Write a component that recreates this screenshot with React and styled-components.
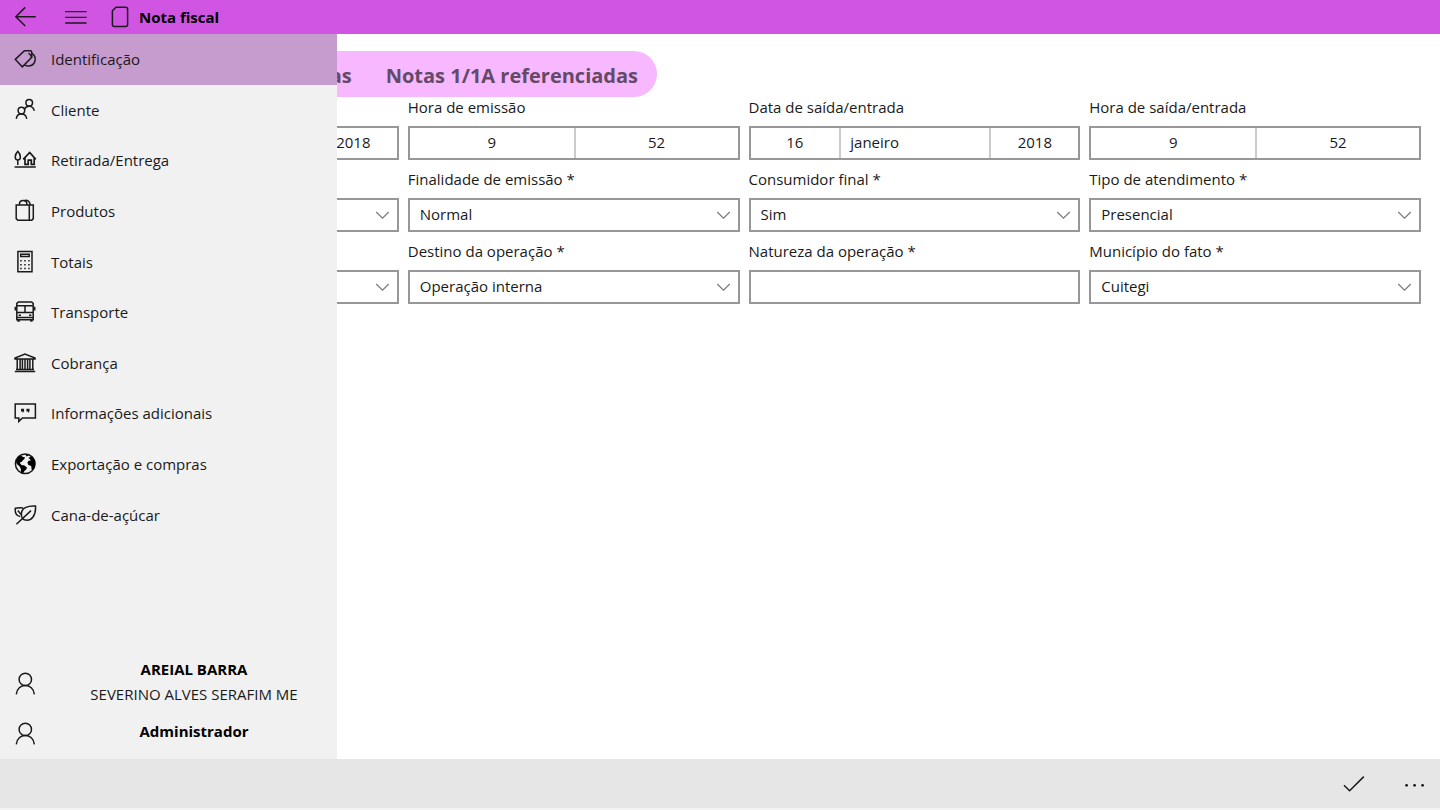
import React, { useState } from "react";
import styled, { createGlobalStyle } from "styled-components";

const GlobalStyle = createGlobalStyle`
  * {
    box-sizing: border-box;
  }

  body {
    margin: 0;
    background: #fff;
    color: #1a1a1a;
    font-family: "Segoe UI", "Open Sans", "Noto Sans", sans-serif;
    font-size: 15px;
    line-height: 20px;
  }

  button, input, select {
    font: inherit;
    color: inherit;
    border-radius: 0;
  }
`;

const Page = styled.div`
  min-height: 100vh;
  display: flex;
  flex-direction: column;
`;

const TopBar = styled.header`
  height: 34px;
  display: flex;
  align-items: center;
  background: #d155e3;
  color: #000;
`;

const BarButton = styled.button`
  width: 50px;
  height: 34px;
  padding: 0;
  border: none;
  background: none;
  display: flex;
  align-items: center;
  justify-content: center;
  cursor: pointer;
`;

const Title = styled.h1`
  margin: 0 0 0 8px;
  display: flex;
  align-items: center;
  gap: 7px;
  font-size: 15px;
  line-height: 20px;
  font-weight: 700;
`;

const Body = styled.div`
  position: relative;
  flex: 1;
  display: flex;
`;

/* opens over the form */
const Drawer = styled.aside`
  position: absolute;
  top: 0;
  bottom: 0;
  left: 0;
  width: 337px;
  display: flex;
  flex-direction: column;
  justify-content: space-between;
  background: #f1f1f1;
`;

const Menu = styled.nav`
  height: 506px;
  display: grid;
  grid-auto-rows: 1fr;
`;

const MenuItem = styled.button`
  border: none;
  padding: 0 0 0 13px;
  display: flex;
  align-items: center;
  gap: 14px;
  text-align: left;
  cursor: pointer;
  background: ${(props) => (props.$active ? "#c69bce" : "transparent")};
`;

const Accounts = styled.div`
  display: grid;
  grid-auto-rows: 50px;
`;

const Account = styled.button`
  border: none;
  background: none;
  padding: 0 0 0 13px;
  display: grid;
  grid-template-columns: 38px 1fr;
  grid-template-rows: 50px;
  align-items: center;
  cursor: pointer;
`;

const AccountText = styled.span`
  display: grid;
  padding-bottom: 5px;
  line-height: 25px;
  text-align: center;

  strong {
    color: #000;
  }
`;

const Content = styled.main`
  flex: 1;
  padding: 17px 19px 0 67px;
`;

const Tabs = styled.div`
  display: flex;
  justify-content: flex-end;
  align-items: center;
  gap: 34px;
  width: 590px;
  height: 46px;
  padding: 4px 19px 0;
  border-radius: 23px;
  background: #f8b8ff;
`;

const Tab = styled.button`
  border: none;
  background: none;
  padding: 0;
  font-size: 20px;
  line-height: 28px;
  font-weight: 700;
  white-space: nowrap;
  color: #634a67;
  cursor: pointer;
`;

const Form = styled.form`
  display: grid;
  grid-template-columns: repeat(4, 1fr);
  gap: 9px;
`;

const Field = styled.div`
  display: grid;
  grid-template-rows: 20px 34px;
  gap: 9px;
  min-width: 0;
`;

const Label = styled.label`
  white-space: nowrap;
`;

const Picker = styled.button`
  border: 2px solid #979797;
  background: #fff;
  padding: 0;
  display: grid;
  grid-template-columns: ${(props) => props.$columns};
  cursor: pointer;
`;

const Part = styled.span`
  display: flex;
  align-items: center;
  justify-content: ${(props) => (props.$left ? "flex-start" : "center")};
  padding: 0 9px 2px;

  & + & {
    border-left: 2px solid #cbcbcb;
  }
`;

const SelectBox = styled.div`
  position: relative;
  display: grid;

  svg {
    position: absolute;
    right: 9px;
    top: 10px;
    pointer-events: none;
  }
`;

const Select = styled.select`
  appearance: none;
  width: 100%;
  border: 2px solid #979797;
  background: #fff;
  padding: 0 32px 2px 10px;
`;

const TextBox = styled.input`
  width: 100%;
  border: 2px solid #979797;
  background: #fff;
  padding: 0 10px 2px;
`;

const CommandBar = styled.footer`
  height: 51px;
  display: flex;
  justify-content: flex-end;
  align-items: center;
  background: #e6e6e6;
  border-bottom: 2px solid #f3f3f3;
`;

const Command = styled.button`
  width: ${(props) => props.$width};
  height: 49px;
  border: none;
  background: none;
  padding: 0;
  display: flex;
  align-items: center;
  justify-content: center;
  cursor: pointer;
`;

function Icon({ children, size = 24 }) {
  return (
    <svg width={size} height={size} viewBox="0 0 24 24" fill="none" stroke="#1a1a1a" strokeWidth="1.5" aria-hidden="true">
      {children}
    </svg>
  );
}

const icons = {
  tag: (
    <>
      <path d="M2.3 12.4 11.4 3.8H17.2Q18.8 3.8 18.8 5.4V10.2L9.3 19.8Z" />
      <path d="M18.8 6.4C24.4 9.6 22.8 18.6 15.8 18.9C14 19 12.6 18.9 11.4 18.2" />
      <path d="M15.6 6.2C17.6 7.6 18.6 9 18.6 11" />
    </>
  ),
  people: (
    <>
      <circle cx="16.2" cy="4.8" r="3.3" />
      <path d="M11.6 11.2C12.8 7.2 19.8 6.6 21.3 12.8" />
      <circle cx="8.4" cy="12.6" r="3.3" />
      <path d="M3.3 20.8C4 14.4 12.8 14.4 13.7 20.8" />
    </>
  ),
  house: (
    <>
      <path d="M4.8 3.4C1.4 6.7 1.4 12 4.8 12S8.2 6.7 4.8 3.4ZM4.8 12V17M1.6 18.9H22.8" />
      <path d="M10.2 11.4 16.7 4.5 22.8 11.4M12 9.6V16.4H15.2V12.1H18.3V16.4H21.2V9.6" strokeWidth="1.7" />
    </>
  ),
  bag: (
    <>
      <path d="M3.2 6.1H20.3V19.6L18.8 21.3H4.8L3.2 19.6ZM16.3 6.1V21.3" />
      <path d="M6.5 6.1V4.8C6.5 0.4 13.9 0.4 13.9 4.8V6.1M10.8 2.2C13.8 0 17.2 2 17.2 6.1" />
    </>
  ),
  calculator: (
    <>
      <path d="M4.9 1.5H19V21.8H4.9ZM7.7 4.2H16.2V6.6H7.7Z" />
      <path d="M7.2 10.7H8.7M11.2 10.7H12.7M15.2 10.7H16.7M7.2 14.7H8.7M11.2 14.7H12.7M15.2 14.7H16.7M7.2 18.6H8.7M11.2 18.6H12.7M15.2 18.6H16.7" />
    </>
  ),
  bus: (
    <>
      <path d="M3.8 19.8V3.4L5.4 1.9H18.6L20.2 3.4V19.8ZM3.8 5.8H20.2M3.8 12.6H20.2M12 5.8V12.6M3.8 17.6H20.2" />
      <path d="M3.8 7.4H2.3V10.4M20.2 7.4H21.7V10.4M5.6 15.2H8M16 15.2H18.4" />
      <path d="M5.6 19.8V21.8M18.4 19.8V21.8" strokeWidth="2.4" />
    </>
  ),
  bank: (
    <>
      <path d="M2 8V7L12 3L22 7V8ZM1.8 20.4H22.2M3 18.4H21" />
      <path d="M4.2 8V18.4M7.1 8V18.4M9.4 8V18.4M12 8V18.4M14.6 8V18.4M16.9 8V18.4M19.8 8V18.4" />
    </>
  ),
  chat: (
    <>
      <path d="M2.2 3H22.4V17H9.4L5.8 20.4V17H2.2Z" />
      <path d="M8 7.8H11.1V10.2L9.6 12V10.4H8ZM13.4 7.8H16.5V10.2L15 12V10.4H13.4Z" fill="#1a1a1a" stroke="none" />
    </>
  ),
  globe: (
    <>
      <circle cx="12.2" cy="11.8" r="9.8" />
      <path
        d="M3 8.6L5.6 4.8L8 3.8L10.2 5L12 5.2L11.2 7.2L9.6 8.4L8.6 10L7 10.2L7.4 12L9 13.2L11 13.2L14 15.6L13.2 17.4L11.2 19.2L10 21.4L8 20.6L7.8 16.8L6.4 14.2L3.6 11.8ZM12.4 2.4L16.2 3L13.6 4.4ZM15.4 6L18.4 4.2L20.6 6L22.2 9.4L22.2 13.8L20 18L18.6 17.4L18.2 14L15.4 13L14.4 10.6L15.6 8.8L17.8 8.4L17 7.2Z"
        fill="#000"
        stroke="none"
      />
    </>
  ),
  leaf: (
    <>
      <path d="M22.5 3C14.2 2.7 8.4 4.7 8.4 11.2C8.4 14 9.4 16 11.4 16.8C18.4 18.8 23.2 12.5 22.5 3Z" />
      <path d="M3.4 21.3L18 7.6M10.2 4.9C7.8 4.6 4.8 4.6 2.3 5.3C1.8 9.6 3.2 12.8 7.2 13.5M4.8 7.6L8.2 11.4" />
    </>
  ),
  person: (
    <>
      <circle cx="12.3" cy="7.4" r="6.2" />
      <path d="M3.3 22.4C4 10.6 20.6 10.6 21.3 22.4" />
    </>
  ),
};

const menu = [
  ["Identificação", "tag"],
  ["Cliente", "people"],
  ["Retirada/Entrega", "house"],
  ["Produtos", "bag"],
  ["Totais", "calculator"],
  ["Transporte", "bus"],
  ["Cobrança", "bank"],
  ["Informações adicionais", "chat"],
  ["Exportação e compras", "globe"],
  ["Cana-de-açúcar", "leaf"],
];

function DateField({ id, label, day, month, year }) {
  return (
    <Field>
      <Label id={id + "-label"} htmlFor={id}>{label}</Label>
      <Picker id={id} type="button" aria-labelledby={`${id}-label ${id}`} $columns="78fr 132fr 78fr">
        <Part>{day}</Part>
        <Part $left>{month}</Part>
        <Part>{year}</Part>
      </Picker>
    </Field>
  );
}

function TimeField({ id, label, hour, minute }) {
  return (
    <Field>
      <Label id={id + "-label"} htmlFor={id}>{label}</Label>
      <Picker id={id} type="button" aria-labelledby={`${id}-label ${id}`} $columns="1fr 1fr">
        <Part>{hour}</Part>
        <Part>{minute}</Part>
      </Picker>
    </Field>
  );
}

function SelectField({ id, label, options }) {
  return (
    <Field>
      <Label htmlFor={id}>{label}</Label>
      <SelectBox>
        <Select id={id}>
          {options.map((option) => (
            <option key={option}>{option}</option>
          ))}
        </Select>
        <svg width="15" height="14" viewBox="0 0 15 14" fill="none" stroke="#7a7a7a" strokeWidth="1.2" aria-hidden="true">
          <path d="M1.2 4 7.5 10.2 13.8 4" />
        </svg>
      </SelectBox>
    </Field>
  );
}

export default function App() {
  const [active, setActive] = useState("Identificação");
  const [open, setOpen] = useState(true);

  return (
    <>
      <GlobalStyle />
      <Page>
        <TopBar>
          <BarButton type="button" aria-label="Voltar">
            <Icon>
              <path d="M22.8 11.7H2.8M12.2 2.4 2.8 11.7 12.2 21" />
            </Icon>
          </BarButton>
          <BarButton type="button" aria-label="Menu" onClick={() => setOpen(!open)}>
            <Icon>
              <path d="M2.2 6.6H23.6M2.2 12.4H23.6M2.2 18H23.6" strokeWidth="1.3" />
            </Icon>
          </BarButton>
          <Title>
            <Icon>
              <path d="M8 2.2H17.6Q19.6 2.2 19.6 4.2V19.6Q19.6 21.6 17.6 21.6H6.4Q4.4 21.6 4.4 19.6V5.8Z" />
            </Icon>
            Nota fiscal
          </Title>
        </TopBar>

        <Body>
          <Content>
            <Tabs>
              <Tab type="button">NF-e referenciadas</Tab>
              <Tab type="button">Notas 1/1A referenciadas</Tab>
            </Tabs>
            <Form>
              <DateField id="data-emissao" label="Data de emissão" day="16" month="janeiro" year="2018" />
              <TimeField id="hora-emissao" label="Hora de emissão" hour="9" minute="52" />
              <DateField id="data-saida" label="Data de saída/entrada" day="16" month="janeiro" year="2018" />
              <TimeField id="hora-saida" label="Hora de saída/entrada" hour="9" minute="52" />

              <SelectField id="tipo-operacao" label="Tipo de operação *" options={["Saída", "Entrada"]} />
              <SelectField id="finalidade" label="Finalidade de emissão *" options={["Normal", "Complementar"]} />
              <SelectField id="consumidor" label="Consumidor final *" options={["Sim", "Não"]} />
              <SelectField id="atendimento" label="Tipo de atendimento *" options={["Presencial", "Internet"]} />

              <SelectField id="impressao" label="Tipo de impressão *" options={["Retrato", "Paisagem"]} />
              <SelectField id="destino" label="Destino da operação *" options={["Operação interna", "Operação interestadual"]} />
              <Field>
                <Label htmlFor="natureza">Natureza da operação *</Label>
                <TextBox id="natureza" type="text" />
              </Field>
              <SelectField id="municipio" label="Município do fato *" options={["Cuitegi"]} />
            </Form>
          </Content>

          {open && (
            <Drawer>
              <Menu>
                {menu.map(([name, icon]) => (
                  <MenuItem key={name} type="button" $active={name === active} onClick={() => setActive(name)}>
                    <Icon>{icons[icon]}</Icon>
                    {name}
                  </MenuItem>
                ))}
              </Menu>
              <Accounts>
                <Account type="button">
                  <Icon>{icons.person}</Icon>
                  <AccountText>
                    <strong>AREIAL BARRA</strong>
                    <span>SEVERINO ALVES SERAFIM ME</span>
                  </AccountText>
                </Account>
                <Account type="button">
                  <Icon>{icons.person}</Icon>
                  <AccountText>
                    <strong>Administrador</strong>
                  </AccountText>
                </Account>
              </Accounts>
            </Drawer>
          )}
        </Body>

        <CommandBar>
          <Command type="button" aria-label="Salvar" $width="72px">
            <Icon>
              <path d="M2 13.2 7.6 18.8 21.8 4.6" />
            </Icon>
          </Command>
          <Command type="button" aria-label="Mais opções" $width="50px">
            <Icon>
              <g fill="#1a1a1a" stroke="none">
                <circle cx="3.6" cy="13.3" r="1.4" />
                <circle cx="11.6" cy="13.3" r="1.4" />
                <circle cx="19.6" cy="13.3" r="1.4" />
              </g>
            </Icon>
          </Command>
        </CommandBar>
      </Page>
    </>
  );
}
